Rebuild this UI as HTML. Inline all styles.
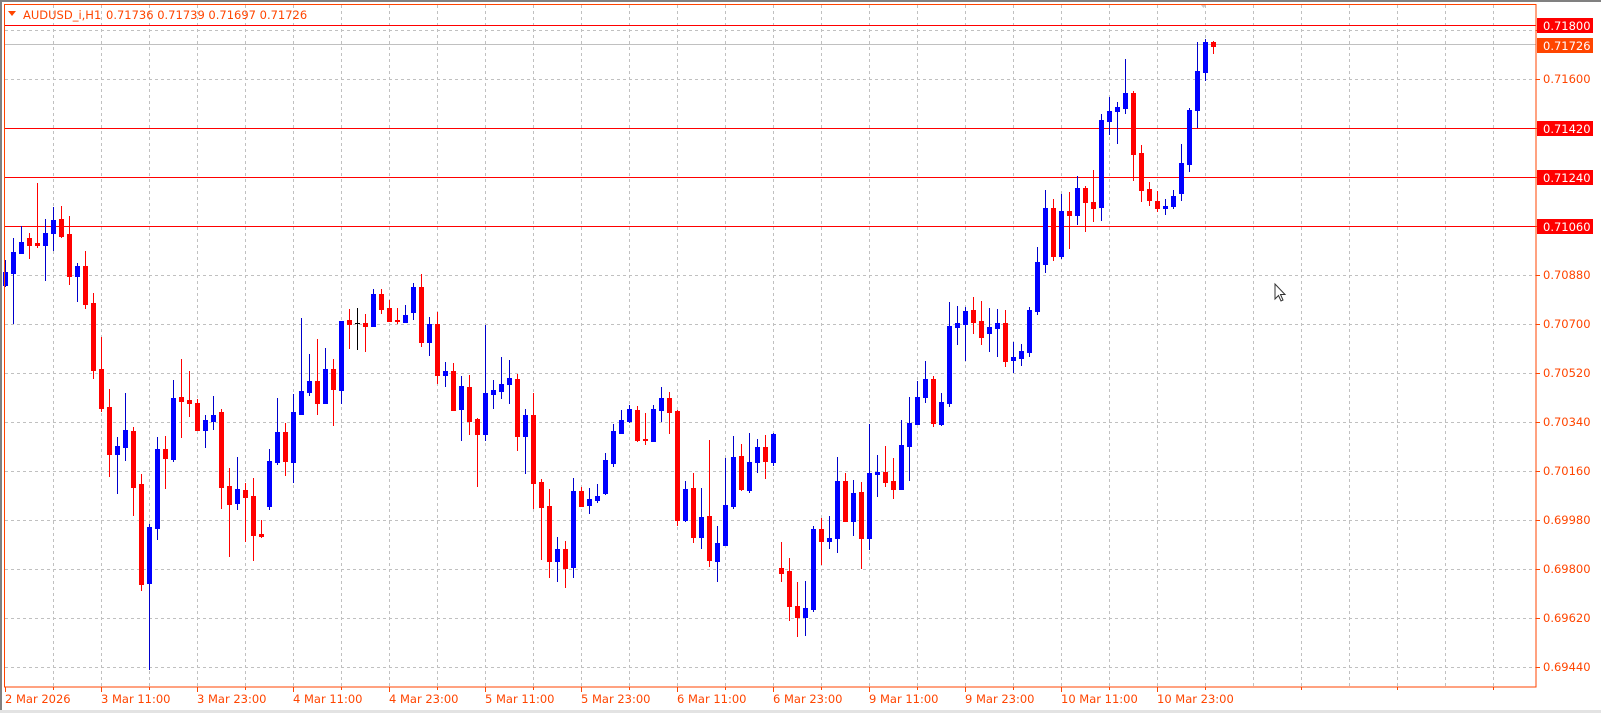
<!DOCTYPE html>
<html><head><meta charset="utf-8">
<style>
html,body{margin:0;padding:0;background:#fff;width:1601px;height:713px;overflow:hidden}
svg{display:block}
text{font-family:"DejaVu Sans","Liberation Sans",sans-serif;font-size:11.5px}
</style></head>
<body>
<svg id="s" width="1601" height="713" xmlns="http://www.w3.org/2000/svg">
<rect x="0" y="0" width="1601" height="713" fill="#fff"/>
<rect x="0" y="0" width="1601" height="2" fill="#808080"/>
<rect x="0" y="0" width="2" height="713" fill="#808080"/>
<rect x="0" y="710" width="1601" height="3" fill="#e3e3e3"/>
<g id="grid" stroke="#c0c0c0" stroke-width="1" stroke-dasharray="3,3"></g>
<line x1="4" y1="44.5" x2="1536" y2="44.5" stroke="#c0c0c0"/>
<g stroke="#ff0000" stroke-width="1">
<line x1="4" y1="25.5" x2="1536" y2="25.5"/>
<line x1="4" y1="128.5" x2="1536" y2="128.5"/>
<line x1="4" y1="177.5" x2="1536" y2="177.5"/>
<line x1="4" y1="226.5" x2="1536" y2="226.5"/>
</g>
<g id="c"></g>
<rect x="4.5" y="4.5" width="1531.5" height="682.5" fill="none" stroke="#ff4500" stroke-width="1"/>
<g id="ticks" stroke="#ff4500"></g>
<path d="M8 11 L16 11 L12 16 Z" fill="#ff4500"/>
<text x="23" y="19" fill="#ff4500">AUDUSD_i,H1</text>
<text x="106" y="19" fill="#ff4500">0.71736 0.71739 0.71697 0.71726</text>
<path d="M1201 5 L1206 5 L1203.5 8 Z" fill="#c8c8c8"/>
<g id="plab" fill="#ff4500"></g>
<rect x="1537" y="18" width="56" height="15" fill="#ff0000"/>
<text x="1543" y="30" fill="#fff">0.71800</text>
<rect x="1537" y="38" width="56" height="15" fill="#ff4500"/>
<text x="1543" y="50" fill="#fff">0.71726</text>
<rect x="1537" y="121" width="56" height="15" fill="#ff0000"/>
<text x="1543" y="133" fill="#fff">0.71420</text>
<rect x="1537" y="170" width="56" height="15" fill="#ff0000"/>
<text x="1543" y="182" fill="#fff">0.71240</text>
<rect x="1537" y="219" width="56" height="15" fill="#ff0000"/>
<text x="1543" y="231" fill="#fff">0.71060</text>
<g id="tlab" fill="#ff4500"></g>
<path d="M1275 284 L1275 299 L1278.5 295.5 L1281 301 L1283 300 L1280.5 294.5 L1285 294.5 Z" fill="#fff" stroke="#333" stroke-width="1"/>
</svg>
<script>
var NS="http://www.w3.org/2000/svg";
function el(p,t,a,txt){var e=document.createElementNS(NS,t);for(var k in a)e.setAttribute(k,a[k]);if(txt)e.textContent=txt;p.appendChild(e);return e;}
var g=document.getElementById('grid');
for(var x=53;x<1536;x+=48)el(g,'line',{x1:x+.5,y1:5,x2:x+.5,y2:687});
var ys=[30,79,128,177,226,275,324,373,422,471,520,569,618,667];
ys.forEach(function(y){el(g,'line',{x1:5,y1:y+.5,x2:1536,y2:y+.5});});
var tk=document.getElementById('ticks');
var pl=document.getElementById('plab');
var prices=["0.71780","0.71600","0.71420","0.71240","0.71060","0.70880","0.70700","0.70520","0.70340","0.70160","0.69980","0.69800","0.69620","0.69440"];
ys.forEach(function(y,i){el(tk,'line',{x1:1536,y1:y+.5,x2:1540,y2:y+.5});if(i>0&&[2,3,4].indexOf(i)<0)el(pl,'text',{x:1543,y:y+4},prices[i]);});
var tl=document.getElementById('tlab');
var tls=["2 Mar 2026","3 Mar 11:00","3 Mar 23:00","4 Mar 11:00","4 Mar 23:00","5 Mar 11:00","5 Mar 23:00","6 Mar 11:00","6 Mar 23:00","9 Mar 11:00","9 Mar 23:00","10 Mar 11:00","10 Mar 23:00"];
tls.forEach(function(s,i){var x=5+96*i;el(tk,'line',{x1:x+.5,y1:687,x2:x+.5,y2:692});el(tl,'text',{x:x,y:703},s);});
for(var x=5+48;x<1536;x+=96){el(tk,'line',{x1:x+.5,y1:687,x2:x+.5,y2:690});}
var D="b260,272,285,287;b238,252,273,324;b226,242,253,254;r233,238,245,259;r183,243,245,248;b219,233,245,281;b207,220,233,251;r206,219,236,238;r216,234,276,285;b263,266,276,302;r251,266,304,309;r293,303,370,379;r337,369,408,412;r389,407,454,477;b437,446,454,494;b393,430,447,461;r427,431,487,516;r474,484,584,591;b524,527,583,670;b437,449,528,540;r436,449,458,489;b380,398,459,462;r359,397,401,438;r371,400,403,417;r399,403,430,430;b415,420,430,448;b396,415,421,430;r409,412,487,509;r468,486,504,557;b457,489,503,510;r483,490,497,542;r478,496,535,561;r520,534,536,538;b449,461,506,510;b398,432,462,465;r423,432,461,476;b394,412,462,483;b318,391,414,414;b354,381,392,396;r339,381,403,415;b348,369,403,403;r359,369,389,426;b321,321,390,404;r309,320,324,349;k308,323,323,350;r314,323,326,352;b289,294,326,326;r289,294,309,314;r300,308,321,322;r308,320,321,324;b305,315,322,322;b283,287,312,320;r274,287,342,347;b317,324,342,356;r312,324,375,384;b362,371,375,387;r363,371,410,411;b376,386,409,441;r375,387,421,435;r418,419,434,487;b325,393,434,441;b380,390,394,409;b357,384,391,399;b360,378,384,404;r374,379,436,451;b409,415,436,474;r393,415,483,509;r479,482,507,560;r489,506,561,578;b537,549,561,582;r541,549,568,588;b478,491,567,578;r487,491,506,506;b488,499,505,514;b484,496,500,503;b453,460,493,495;b424,431,463,467;b410,420,433,433;b405,409,421,423;r406,410,440,442;r413,439,440,445;b405,409,441,441;b387,398,410,422;r392,398,412,434;r410,411,520,526;b481,489,520,522;r473,488,537,543;b488,517,537,549;r440,516,560,567;b526,543,561,582;b458,505,545,545;b436,457,506,509;r444,456,489,491;b433,462,490,493;b439,447,462,473;r435,447,461,479;b433,434,462,466;r542,568,573,582;r558,571,606,621;r582,606,617,637;b581,608,617,636;b526,529,609,612;r518,529,541,565;b516,538,541,549;b457,481,538,553;r473,481,521,522;b480,493,521,536;r482,492,538,569;b424,473,538,550;b455,472,474,497;r446,472,482,487;r458,481,489,499;b420,445,489,489;b397,423,446,481;b381,397,424,424;b361,379,397,403;r376,379,423,427;b393,402,424,426;b302,326,403,407;b306,323,327,345;b307,311,324,361;r297,310,322,334;r301,321,337,345;b308,327,333,352;b309,323,328,357;r310,323,361,367;b342,357,360,373;b344,351,358,366;b307,310,352,357;b247,262,311,315;b190,208,264,273;r199,208,256,261;b194,211,256,259;r192,211,215,249;b176,188,215,225;r186,188,202,232;r170,202,208,222;b114,120,207,221;b97,111,121,135;b102,107,111,144;b59,93,108,114;r91,93,154,181;r145,153,190,202;r182,189,200,206;r191,201,208,212;b199,206,208,215;b190,196,206,209;b144,163,193,201;b108,110,164,172;b42,71,110,128;b39,42,72,81;r41,42,46,54";
var c=document.getElementById('c');
D.split(';').forEach(function(s,i){
 var t=s[0],v=s.slice(1).split(',').map(Number),x=5+8*i;
 var bc=t=='b'?'#0000ff':t=='r'?'#ff0000':'#000';
 var wc=t=='b'?'#0000cc':t=='r'?'#ff0000':'#000';
 el(c,'rect',{x:x,y:v[0],width:1,height:Math.max(1,v[3]-v[0]),fill:wc});
 var h=v[2]-v[1];
 if(h<1){el(c,'rect',{x:x-2,y:v[1],width:5,height:1,fill:bc});}
 else el(c,'rect',{x:x-2,y:v[1],width:5,height:h+1,fill:bc});
});
</script>
</body></html>
